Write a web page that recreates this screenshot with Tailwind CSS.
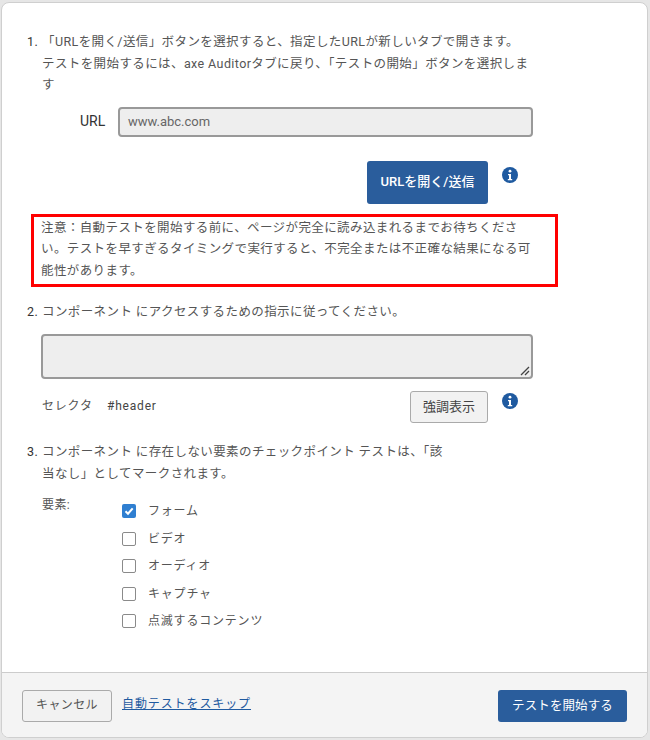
<!DOCTYPE html>
<html lang="ja">
<head>
<meta charset="utf-8">
<script src="https://cdn.jsdelivr.net/npm/@tailwindcss/browser@4"></script>
</head>
<body class="m-0 bg-[#e6e6e6]">
<div class="w-[650px] h-[740px] pt-[2px] pl-[1px] pr-[2px] pb-[2px] font-['Roboto','Noto_Sans_CJK_JP',sans-serif] text-[12.5px] leading-[21.5px] tracking-[0.4px] text-[#555]">
  <div class="h-full flex flex-col bg-white rounded-[8px] border border-[#cfcfcf] overflow-hidden">
    <main class="flex-1 pl-[25px] pt-[28px]">
      <section class="flex">
        <span class="w-[15px] shrink-0 text-[#333]">1.</span>
        <div class="w-[491px]">
          <p>「URLを開く/送信」ボタンを選択すると、指定したURLが新しいタブで開きます。<br>テストを開始するには、axe Auditorタブに戻り、「テストの開始」ボタンを選択しま<br>す</p>
          <div class="flex items-center mt-[11px]">
            <label class="w-[76px] pl-[38px] text-[14px] tracking-normal text-[#333]">URL</label>
            <div class="w-[415px] h-[30px] flex items-center px-[8px] bg-[#eee] border-2 border-[#999] rounded-[4px] text-[13px] tracking-normal text-[#666]">www.abc.com</div>
          </div>
          <div class="flex justify-end mt-[24px] pr-[45px] relative">
            <button class="w-[121px] h-[43px] bg-[#2a5d9c] rounded-[3px] text-white text-[13px] tracking-normal font-medium">URLを開く/送信</button>
            <svg class="absolute right-[14px] top-[5px] w-[18px] h-[18px]" viewBox="0 0 18 18"><circle cx="9" cy="9" r="8" fill="#1f5aa0"/><circle cx="9" cy="5.2" r="1.4" fill="#fff"/><path d="M7 8h3v5h1.2v1.2H6.8V13H8V9.2H7z" fill="#fff"/></svg>
          </div>
        </div>
      </section>
      <div class="w-[527px] h-[73px] ml-[4px] mt-[10px] -mb-[1px] border-[3px] border-[#ff0000] pl-[7px] pt-0">注意：自動テストを開始する前に、ページが完全に読み込まれるまでお待ちくださ<br>い。テストを早すぎるタイミングで実行すると、不完全または不正確な結果になる可<br>能性があります。</div>
      <section class="flex mt-[15px]">
        <span class="w-[15px] shrink-0 text-[#333]">2.</span>
        <div class="w-[492px] -ml-[1px]">
          <p class="ml-[1px]">コンポーネント にアクセスするための指示に従ってください。</p>
          <div class="relative mt-[12px] h-[45px] bg-[#eee] border-2 border-[#999] rounded-[4px]">
            <svg class="absolute right-[1px] bottom-[1px] w-[10px] h-[10px]" viewBox="0 0 10 10"><path d="M1 9 9 1M5 9 9 5" stroke="#444" stroke-width="1.3"/></svg>
          </div>
          <div class="relative flex items-center mt-[12px] h-[32px] pl-[1px] pr-[45px]">
            <span class="w-[65px] text-[12px] tracking-[0.8px]">セレクタ</span>
            <span class="flex-1 text-[12px] tracking-[0.8px] text-[#444]">#header</span>
            <button class="w-[78px] h-[32px] bg-[#f2f2f2] border border-[#aaa] rounded-[3px] text-[13px] tracking-normal text-[#444]">強調表示</button>
            <svg class="absolute right-[14px] top-[1px] w-[18px] h-[18px]" viewBox="0 0 18 18"><circle cx="9" cy="9" r="8" fill="#1f5aa0"/><circle cx="9" cy="5.2" r="1.4" fill="#fff"/><path d="M7 8h3v5h1.2v1.2H6.8V13H8V9.2H7z" fill="#fff"/></svg>
          </div>
        </div>
      </section>
      <section class="flex mt-[18px]">
        <span class="w-[15px] shrink-0 text-[#333]">3.</span>
        <div class="w-[420px]">
          <p>コンポーネント に存在しない要素のチェックポイント テストは、「該<br>当なし」としてマークされます。</p>
          <div class="flex mt-[11px]">
            <span class="w-[80px] text-[12px]">要素:</span>
            <ul class="flex flex-col gap-[7.5px] mt-[6px] text-[12px] leading-[20px] tracking-[0.8px]">
              <li class="flex items-center gap-[12px]"><span class="w-[14px] h-[14px] flex items-center justify-center bg-[#2f7fd1] rounded-[2px]"><svg class="w-[12px] h-[12px]" viewBox="0 0 12 12"><path d="M2.5 6.2 5 8.7 9.7 3.3" fill="none" stroke="#fff" stroke-width="2"/></svg></span>フォーム</li>
              <li class="flex items-center gap-[12px]"><span class="w-[14px] h-[14px] border-[1.5px] border-[#8a8a8a] rounded-[2px]"></span>ビデオ</li>
              <li class="flex items-center gap-[12px]"><span class="w-[14px] h-[14px] border-[1.5px] border-[#8a8a8a] rounded-[2px]"></span>オーディオ</li>
              <li class="flex items-center gap-[12px]"><span class="w-[14px] h-[14px] border-[1.5px] border-[#8a8a8a] rounded-[2px]"></span>キャプチャ</li>
              <li class="flex items-center gap-[12px]"><span class="w-[14px] h-[14px] border-[1.5px] border-[#8a8a8a] rounded-[2px]"></span>点滅するコンテンツ</li>
            </ul>
          </div>
        </div>
      </section>
    </main>
    <footer class="h-[65px] shrink-0 flex items-start pt-[17px] pl-[20px] pr-[20px] bg-[#f4f4f4] border-t border-[#ccc]">
      <button class="w-[90px] h-[32px] bg-[#f2f2f2] border border-[#aaa] rounded-[3px] text-[12px] text-[#555]">キャンセル</button>
      <a class="ml-[10px] mt-[4px] text-[12px] tracking-[0.9px] text-[#1f5aa0] underline" href="#">自動テストをスキップ</a>
      <button class="ml-auto w-[129px] h-[32px] bg-[#2a5d9c] rounded-[3px] text-white text-[12.5px] tracking-[0.1px]">テストを開始する</button>
    </footer>
  </div>
</div>
</body>
</html>
